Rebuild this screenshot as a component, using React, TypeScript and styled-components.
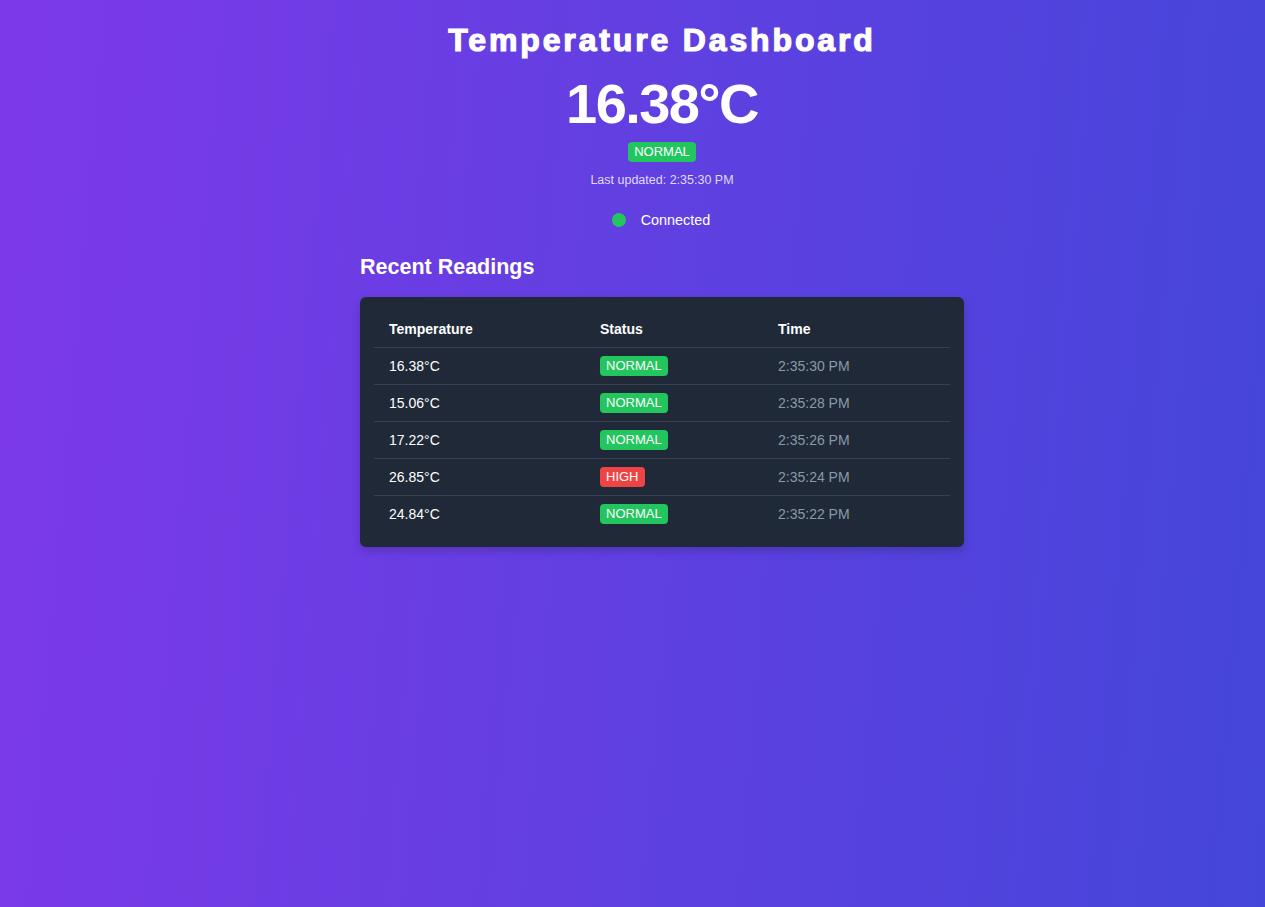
import React from "react";
import styled, { createGlobalStyle } from "styled-components";

const GlobalStyle = createGlobalStyle`
  html, body {
    margin: 0;
    padding: 0;
    min-height: 100%;
  }
  body {
    font-family: "Liberation Sans", Arial, sans-serif;
    color: #ffffff;
    background: linear-gradient(95deg, #7d39e8 0%, #4446da 100%);
    min-height: 907px;
  }
`;

const Page = styled.div`
  min-height: 907px;
  padding-left: 59px;
  box-sizing: border-box;
  display: flex;
  justify-content: center;
`;

const Container = styled.main`
  width: 604px;
  display: flex;
  flex-direction: column;
  align-items: center;
`;

const Title = styled.h1`
  margin: 22px 0 0;
  font-size: 32px;
  line-height: 37px;
  font-weight: 700;
  letter-spacing: 2.85px;
  -webkit-text-stroke: 1.2px #ffffff;
  white-space: nowrap;
`;

const BigTemp = styled.div`
  margin-top: 17px;
  font-size: 56px;
  line-height: 56px;
  font-weight: 700;
  letter-spacing: -1.6px;
`;

const Badge = styled.span<{ $level: "normal" | "high" }>`
  display: inline-block;
  background: ${(p) => (p.$level === "high" ? "#ef4444" : "#22c55e")};
  color: #ffffff;
  font-size: 13px;
  line-height: 16px;
  padding: 2px 6px;
  border-radius: 4px;
`;

const HeroBadge = styled(Badge)`
  margin-top: 10px;
`;

const Updated = styled.div`
  margin-top: 11px;
  font-size: 12.5px;
  line-height: 14px;
  color: rgba(255, 255, 255, 0.82);
`;

const Connection = styled.div`
  margin-top: 25px;
  display: flex;
  align-items: center;
  gap: 15px;
  font-size: 14.4px;
  line-height: 16px;
  margin-right: 2px;
`;

const Dot = styled.span`
  width: 14px;
  height: 14px;
  border-radius: 50%;
  background: #22c55e;
`;

const SectionTitle = styled.h2`
  align-self: flex-start;
  margin: 27px 0 0;
  font-size: 21.5px;
  line-height: 24px;
  font-weight: 700;
`;

const Card = styled.section`
  align-self: stretch;
  margin-top: 18px;
  background: #1f2937;
  border-radius: 6px;
  padding: 14px;
  box-shadow: 0 4px 10px rgba(0, 0, 0, 0.18);
`;

const Table = styled.table`
  width: 100%;
  border-collapse: collapse;
  table-layout: fixed;
`;

const HeadCell = styled.th`
  text-align: left;
  font-size: 14px;
  font-weight: 700;
  color: #ffffff;
  padding: 10px 15px;
  line-height: 16px;
  border-bottom: 1px solid #374151;
`;

const Cell = styled.td<{ $muted?: boolean }>`
  font-size: 14px;
  line-height: 16px;
  padding: 8px 15px;
  color: ${(p) => (p.$muted ? "#8a99a8" : "#ffffff")};
  border-bottom: 1px solid #374151;
  vertical-align: middle;
`;

const Row = styled.tr`
  height: 37px;
  &:last-child ${Cell} {
    border-bottom: none;
  }
`;

type Reading = { temp: string; status: "normal" | "high"; time: string };

const readings: Reading[] = [
  { temp: "16.38°C", status: "normal", time: "2:35:30 PM" },
  { temp: "15.06°C", status: "normal", time: "2:35:28 PM" },
  { temp: "17.22°C", status: "normal", time: "2:35:26 PM" },
  { temp: "26.85°C", status: "high", time: "2:35:24 PM" },
  { temp: "24.84°C", status: "normal", time: "2:35:22 PM" },
];

export default function App() {
  return (
    <>
      <GlobalStyle />
      <Page>
        <Container>
          <Title>Temperature Dashboard</Title>
          <BigTemp>16.38°C</BigTemp>
          <HeroBadge $level="normal">NORMAL</HeroBadge>
          <Updated>Last updated: 2:35:30 PM</Updated>
          <Connection>
            <Dot />
            <span>Connected</span>
          </Connection>
          <SectionTitle>Recent Readings</SectionTitle>
          <Card>
            <Table>
              <colgroup>
                <col style={{ width: 211 }} />
                <col style={{ width: 178 }} />
                <col />
              </colgroup>
              <thead>
                <tr>
                  <HeadCell>Temperature</HeadCell>
                  <HeadCell>Status</HeadCell>
                  <HeadCell>Time</HeadCell>
                </tr>
              </thead>
              <tbody>
                {readings.map((r) => (
                  <Row key={r.time}>
                    <Cell>{r.temp}</Cell>
                    <Cell>
                      <Badge $level={r.status}>{r.status.toUpperCase()}</Badge>
                    </Cell>
                    <Cell $muted>{r.time}</Cell>
                  </Row>
                ))}
              </tbody>
            </Table>
          </Card>
        </Container>
      </Page>
    </>
  );
}
